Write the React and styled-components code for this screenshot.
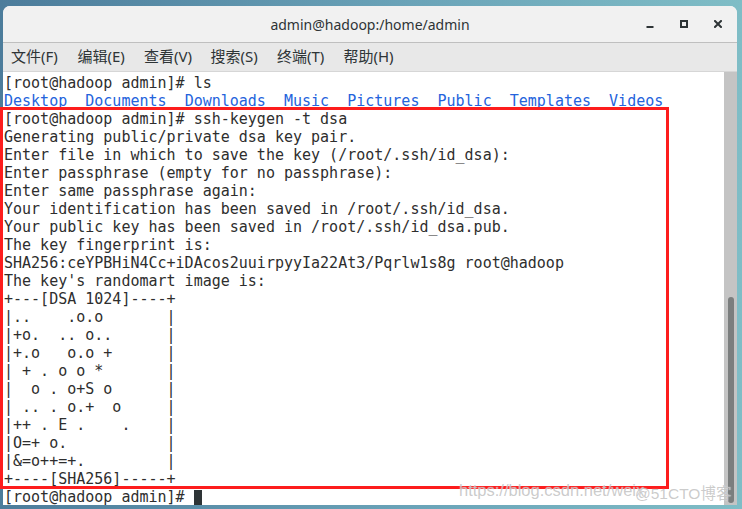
import React from 'react';
import styled, {createGlobalStyle} from 'styled-components';

const GlobalStyle = createGlobalStyle`
  html, body {
    margin: 0;
    padding: 0;
    overflow: hidden;
  }
`;

const Desktop = styled.div`
  position: relative;
  width: 742px;
  height: 509px;
  box-sizing: border-box;
  padding: 6px 5px 4px 3px;
  background: linear-gradient(90deg, #4c7c9b 0%, #6aa3b8 55%, #7fbdc6 100%);
`;

const Window = styled.div`
  height: 499px;
  display: flex;
  flex-direction: column;
  background: #ffffff;
  border-radius: 7px 7px 0 0;
  overflow: hidden;
`;

const TitleBar = styled.div`
  height: 36px;
  flex-shrink: 0;
  display: grid;
  grid-template-columns: 1fr auto 1fr;
  align-items: center;
  background: #f1f1f1;
  border-bottom: 1px solid #bfbfbf;
  font-family: "Noto Sans", "DejaVu Sans", sans-serif;
  font-size: 14px;
  color: #2e3436;
`;

const Title = styled.div`
  grid-column: 2;
  padding-top: 1px;
`;

const Controls = styled.div`
  grid-column: 3;
  justify-self: end;
  display: flex;
  align-items: center;
  gap: 26px;
  padding-right: 15px;
`;

const ControlButton = styled.svg`
  width: 8px;
  height: 8px;
  display: block;
`;

const MenuBar = styled.div`
  height: 29px;
  box-sizing: border-box;
  flex-shrink: 0;
  display: flex;
  align-items: center;
  gap: 16.5px;
  padding: 0 0 3px 8px;
  background: #e8e8e8;
  border-bottom: 1px solid #d6d6d6;
  font-family: "Noto Sans", "Noto Sans CJK SC", sans-serif;
  font-size: 15px;
  color: #2e3436;
`;

const MenuItem = styled.span`
  min-width: 50px;
  white-space: nowrap;
`;

const Body = styled.div`
  flex: 1;
  display: flex;
  min-height: 0;
`;

const Terminal = styled.div`
  flex: 1;
  padding: 2px 0 0 1px;
  background: #ffffff;
  font-family: "DejaVu Sans Mono", "Liberation Mono", monospace;
  font-size: 15px;
  line-height: 18px;
  color: #2e2e2e;
`;

const Line = styled.div`
  white-space: pre;
  height: 18px;
`;

const Dir = styled.span`
  color: #2463dc;
`;

const Cursor = styled.span`
  display: inline-block;
  width: 8px;
  height: 15px;
  vertical-align: -3px;
  background: #2e3436;
`;

const Scrollbar = styled.div`
  width: 13px;
  flex-shrink: 0;
  display: flex;
  flex-direction: column;
  justify-content: flex-end;
  align-items: center;
  padding-bottom: 2px;
  box-sizing: border-box;
  background: #c4c4c4;
`;

const Thumb = styled.div`
  width: 6px;
  height: 206px;
  border-radius: 3px;
  background: #7b7e7e;
`;

const Highlight = styled.div`
  position: absolute;
  left: 0;
  top: 107px;
  width: 669px;
  height: 382px;
  box-sizing: border-box;
  border: 3px solid #fd1d1d;
  pointer-events: none;
`;

const Watermark = styled.span`
  position: absolute;
  top: ${p => p.top}px;
  left: ${p => p.left}px;
  font-family: "Liberation Sans", "Noto Sans CJK SC", sans-serif;
  font-size: ${p => p.size}px;
  color: rgba(160, 160, 160, 0.55);
  text-shadow: 0 0 1px rgba(255, 255, 255, 0.9);
  white-space: nowrap;
`;

const menus = ['文件(F)', '编辑(E)', '查看(V)', '搜索(S)', '终端(T)', '帮助(H)'];

const output = [
  "[root@hadoop admin]# ssh-keygen -t dsa",
  "Generating public/private dsa key pair.",
  "Enter file in which to save the key (/root/.ssh/id_dsa):",
  "Enter passphrase (empty for no passphrase):",
  "Enter same passphrase again:",
  "Your identification has been saved in /root/.ssh/id_dsa.",
  "Your public key has been saved in /root/.ssh/id_dsa.pub.",
  "The key fingerprint is:",
  "SHA256:ceYPBHiN4Cc+iDAcos2uuirpyyIa22At3/Pqrlw1s8g root@hadoop",
  "The key's randomart image is:",
  "+---[DSA 1024]----+",
  "|..    .o.o       |",
  "|+o.  .. o..      |",
  "|+.o   o.o +      |",
  "| + . o o *       |",
  "|  o . o+S o      |",
  "| .. . o.+  o     |",
  "|++ . E .    .    |",
  "|O=+ o.           |",
  "|&=o++=+.         |",
  "+----[SHA256]-----+",
];

const dirs = ['Desktop', 'Documents', 'Downloads', 'Music', 'Pictures', 'Public', 'Templates', 'Videos'];

export default function App() {
  return (
    <Desktop>
      <GlobalStyle />
      <Window>
        <TitleBar>
          <Title>admin@hadoop:/home/admin</Title>
          <Controls>
            <ControlButton viewBox="0 0 8 8">
              <rect x="0.5" y="6" width="7" height="2" fill="#2e3436" />
            </ControlButton>
            <ControlButton viewBox="0 0 8 8">
              <rect x="1" y="1" width="6" height="6" fill="none" stroke="#2e3436" strokeWidth="2" />
            </ControlButton>
            <ControlButton viewBox="0 0 8 8">
              <path d="M1 1 L7 7 M7 1 L1 7" stroke="#2e3436" strokeWidth="2" strokeLinecap="square" />
            </ControlButton>
          </Controls>
        </TitleBar>
        <MenuBar>
          {menus.map(m => <MenuItem key={m}>{m}</MenuItem>)}
        </MenuBar>
        <Body>
          <Terminal>
            <Line>[root@hadoop admin]# ls</Line>
            <Line>
              {dirs.map((d, i) => (
                <React.Fragment key={d}>
                  <Dir>{d}</Dir>{i < dirs.length - 1 ? '  ' : ''}
                </React.Fragment>
              ))}
            </Line>
            {output.map((l, i) => <Line key={i}>{l}</Line>)}
            <Line>[root@hadoop admin]# <Cursor /></Line>
          </Terminal>
          <Scrollbar>
            <Thumb />
          </Scrollbar>
        </Body>
      </Window>
      <Highlight />
      <Watermark top={481} left={459} size={16.5}>https://blog.csdn.net/weix</Watermark>
      <Watermark top={481} left={635} size={15.5}>@51CTO博客</Watermark>
    </Desktop>
  );
}
